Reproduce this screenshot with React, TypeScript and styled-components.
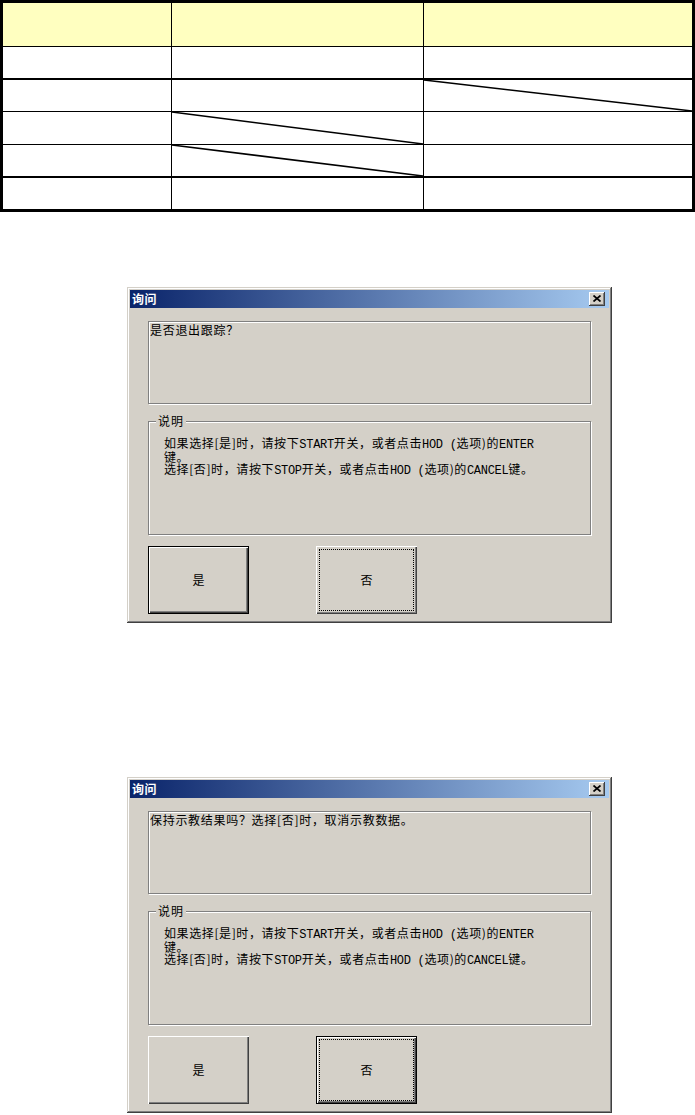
import React from 'react';
import styled, { createGlobalStyle } from 'styled-components';

const GlobalStyle = createGlobalStyle`
  html, body { margin: 0; padding: 0; background: #ffffff; }
  body { font-family: "Noto Sans CJK SC", "Noto Sans", sans-serif; }
`;

const Page = styled.div`
  width: 695px;
  display: flex;
  flex-direction: column;
  align-items: flex-start;
`;

/* ---------- table ---------- */
const Table = styled.div`
  width: 695px;
  box-sizing: border-box;
  border: 3px solid #000;
  display: flex;
  flex-direction: column;
`;

const Row = styled.div<{ $h: number; $thick?: boolean; $head?: boolean }>`
  display: grid;
  grid-template-columns: 169px 252px 1fr;
  height: ${(p) => p.$h}px;
  box-sizing: border-box;
  border-bottom: ${(p) => (p.$thick ? 2 : 1)}px solid #000;
  background: ${(p) => (p.$head ? '#ffffc0' : '#ffffff')};
  &:last-child {
    border-bottom: none;
  }
`;

const Cell = styled.div`
  position: relative;
  border-right: 1px solid #000;
  &:last-child {
    border-right: none;
  }
`;

const DiagonalSvg = styled.svg`
  position: absolute;
  left: 0;
  top: 0;
  width: 100%;
  height: 100%;
  overflow: visible;
`;

const Diagonal = () => (
  <DiagonalSvg viewBox="0 0 100 100" preserveAspectRatio="none">
    <line x1="0" y1="0" x2="100" y2="100" stroke="#000" strokeWidth="1.6" vectorEffect="non-scaling-stroke" />
  </DiagonalSvg>
);

/* ---------- dialog ---------- */
const Window = styled.div<{ $mt: number }>`
  margin-top: ${(p) => p.$mt}px;
  margin-left: 127px;
  width: 485px;
  height: 336px;
  box-sizing: border-box;
  padding: 3px 3px 3px 3px;
  background: #d4d0c8;
  box-shadow: inset -1px -1px 0 #404040, inset 1px 1px 0 #d4d0c8, inset -2px -2px 0 #808080,
    inset 2px 2px 0 #ffffff;
  display: flex;
  flex-direction: column;
  font-family: "Noto Sans CJK SC", sans-serif;
  font-size: 12px;
  color: #000;
`;

const TitleBar = styled.div`
  height: 18px;
  flex: none;
  display: flex;
  align-items: center;
  justify-content: space-between;
  padding: 0 4px 0 2px;
  background: linear-gradient(to right, #0a246a 0%, #a6caf0 100%);
`;

const TitleText = styled.span`
  color: #fff;
  font-weight: bold;
  font-size: 12px;
  line-height: 14px;
  letter-spacing: 0.5px;
`;

const CloseButton = styled.div`
  width: 16px;
  height: 14px;
  box-sizing: border-box;
  background: #d4d0c8;
  box-shadow: inset -1px -1px 0 #404040, inset 1px 1px 0 #ffffff, inset -2px -2px 0 #808080;
  display: flex;
  align-items: center;
  justify-content: center;
  padding: 0 1px 1px 0;
`;

const Body = styled.div`
  flex: 1;
  display: flex;
  flex-direction: column;
  padding: 13px 18px 0 18px;
`;

const MessageBox = styled.div`
  height: 83px;
  box-sizing: border-box;
  border: 1px solid #808080;
  box-shadow: inset 1px 1px 0 #ffffff, 1px 1px 0 #ffffff;
  padding: 1px 2px 0 1px;
  line-height: 13px;
  letter-spacing: 0.7px;
`;

const GroupBox = styled.div`
  position: relative;
  margin-top: 17px;
  height: 114px;
  box-sizing: border-box;
  border: 1px solid #808080;
  box-shadow: inset 1px 1px 0 #ffffff, 1px 1px 0 #ffffff;
  padding: 15px 8px 0 15px;
  line-height: 12px;
  letter-spacing: 0.6px;
`;

const GroupLabel = styled.span`
  position: absolute;
  left: 7px;
  top: -8px;
  padding: 0 2px;
  background: #d4d0c8;
  line-height: 14px;
  letter-spacing: 1px;
`;

const Latin = styled.span`
  font-family: "Liberation Mono", monospace;
  font-size: 12px;
  letter-spacing: -0.3px;
`;

const ButtonRow = styled.div`
  margin-top: 11px;
  display: flex;
  gap: 67px;
`;

const Button = styled.div<{ $default?: boolean; $focus?: boolean }>`
  width: 101px;
  height: 68px;
  box-sizing: border-box;
  display: flex;
  align-items: center;
  justify-content: center;
  background: #d4d0c8;
  border: ${(p) => (p.$default ? '1px solid #000' : 'none')};
  box-shadow: inset 1px 1px 0 #ffffff, inset -1px -1px 0 #404040, inset -2px -2px 0 #808080;
  outline: ${(p) => (p.$focus ? '1px dotted #000' : 'none')};
  outline-offset: -4px;
  font-size: 12px;
  padding-bottom: 1px;
`;

const CloseGlyph = () => (
  <svg width="8" height="7" viewBox="0 0 8 7">
    <path d="M0.5 0.5 L7.5 6.5 M7.5 0.5 L0.5 6.5" stroke="#000" strokeWidth="1.7" fill="none" />
  </svg>
);

const Explanation = () => (
  <>
    如果选择[是]时，请按下<Latin>START</Latin>开关，或者点击<Latin>HOD (</Latin>选项)的<Latin>ENTER</Latin>
    <br />
    键。
    <br />
    选择[否]时，请按下<Latin>STOP</Latin>开关，或者点击<Latin>HOD (</Latin>选项)的<Latin>CANCEL</Latin>键。
  </>
);

const Dialog = ({
  mt,
  message,
  yesDefault,
}: {
  mt: number;
  message: string;
  yesDefault: boolean;
}) => (
  <Window $mt={mt}>
    <TitleBar>
      <TitleText>询问</TitleText>
      <CloseButton>
        <CloseGlyph />
      </CloseButton>
    </TitleBar>
    <Body>
      <MessageBox>{message}</MessageBox>
      <GroupBox>
        <GroupLabel>说明</GroupLabel>
        <Explanation />
      </GroupBox>
      <ButtonRow>
        <Button $default={yesDefault}>是</Button>
        <Button $default={!yesDefault} $focus>
          否
        </Button>
      </ButtonRow>
    </Body>
  </Window>
);

export default function App() {
  return (
    <Page>
      <GlobalStyle />
      <Table>
        <Row $h={44} $head>
          <Cell />
          <Cell />
          <Cell />
        </Row>
        <Row $h={33} $thick>
          <Cell />
          <Cell />
          <Cell />
        </Row>
        <Row $h={32}>
          <Cell />
          <Cell />
          <Cell>
            <Diagonal />
          </Cell>
        </Row>
        <Row $h={33}>
          <Cell />
          <Cell>
            <Diagonal />
          </Cell>
          <Cell />
        </Row>
        <Row $h={33} $thick>
          <Cell />
          <Cell>
            <Diagonal />
          </Cell>
          <Cell />
        </Row>
        <Row $h={31}>
          <Cell />
          <Cell />
          <Cell />
        </Row>
      </Table>
      <Dialog mt={75} message="是否退出跟踪？" yesDefault />
      <Dialog mt={154} message="保持示教结果吗？选择[否]时，取消示教数据。" yesDefault={false} />
    </Page>
  );
}
